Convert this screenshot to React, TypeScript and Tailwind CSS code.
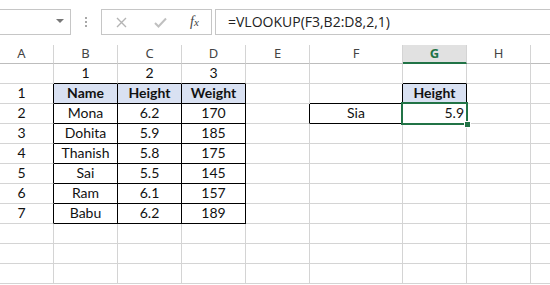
import React from "react";

const W = [54, 64, 64, 64, 64, 93, 64, 64, 60];
const LETTERS = ["A", "B", "C", "D", "E", "F", "G", "H", ""];
const GRID = "#d4d4d4";
const BLK = "#000000";

type Cell = { t?: string; align?: "c" | "r" | "l"; bold?: boolean; bg?: string; r?: string; b?: string };

const data: (string | undefined)[][] = [
  ["", "1", "2", "3", "", "", "", "", ""],
  ["1", "Name", "Height", "Weight", "", "", "Height", "", ""],
  ["2", "Mona", "6.2", "170", "", "Sia", "5.9", "", ""],
  ["3", "Dohita", "5.9", "185", "", "", "", "", ""],
  ["4", "Thanish", "5.8", "175", "", "", "", "", ""],
  ["5", "Sai", "5.5", "145", "", "", "", "", ""],
  ["6", "Ram", "6.1", "157", "", "", "", "", ""],
  ["7", "Babu", "6.2", "189", "", "", "", "", ""],
  ["", "", "", "", "", "", "", "", ""],
  ["", "", "", "", "", "", "", "", ""],
  ["", "", "", "", "", "", "", "", ""],
];

function cellFor(r: number, c: number): Cell {
  const cell: Cell = { t: data[r][c], align: "c", r: GRID, b: GRID };
  if (r === 0 && c >= 1 && c <= 3) cell.b = BLK;
  if (r >= 1 && r <= 7) {
    if (c === 0) cell.r = BLK;
    if (c >= 1 && c <= 3) {
      cell.r = BLK;
      cell.b = BLK;
    }
  }
  if (r === 1 && c >= 1 && c <= 3) {
    cell.bold = true;
    cell.bg = "#d9e1f2";
  }
  if (r === 0 && c === 6) cell.b = BLK;
  if (r === 1 && c === 5) {
    cell.r = BLK;
    cell.b = BLK;
  }
  if (r === 1 && c === 6) {
    cell.r = BLK;
    cell.b = BLK;
    cell.bold = true;
    cell.bg = "#d9e1f2";
  }
  if (r === 2 && c === 4) cell.r = BLK;
  if (r === 2 && c === 5) {
    cell.r = BLK;
    cell.b = BLK;
  }
  if (r === 2 && c === 6) {
    cell.align = "r";
    cell.b = BLK;
    cell.r = BLK;
  }
  return cell;
}

export default function App() {
  return (
    <div
      className="relative w-[550px] h-[285px] overflow-hidden bg-white"
      style={{ fontFamily: "Lato, 'Liberation Sans', sans-serif" }}
    >
      {/* formula bar */}
      <div className="flex items-start h-[45px] pt-[9px]">
        <div className="relative w-[71px] h-[26px] border border-l-0 border-[#c6c6c6]">
          <svg className="absolute left-[56px] top-[9px]" width="8" height="5" viewBox="0 0 8 5">
            <path d="M0 0 L8 0 L4 4 Z" fill="#777" />
          </svg>
        </div>
        <div className="w-[30px] h-[26px] flex flex-col items-center justify-center gap-[2px]">
          <div className="w-[2px] h-[2px] bg-[#a8a8a8]" />
          <div className="w-[2px] h-[2px] bg-[#a8a8a8]" />
          <div className="w-[2px] h-[2px] bg-[#a8a8a8]" />
        </div>
        <div className="w-[111px] h-[26px] border border-[#c6c6c6] flex items-center">
          <svg className="ml-[14px]" width="11" height="11" viewBox="0 0 11 11">
            <path d="M1 1 L10 10 M10 1 L1 10" stroke="#b4b4b4" strokeWidth="1.4" />
          </svg>
          <svg className="ml-[27px]" width="13" height="11" viewBox="0 0 13 11">
            <path d="M1 6 L4.5 9.5 L12 1.5" stroke="#c0c0c0" strokeWidth="2" fill="none" />
          </svg>
          <span
            className="ml-[23px] text-[14px] italic text-[#444] leading-none"
            style={{ fontFamily: "'Liberation Serif', serif" }}
          >
            f<span className="text-[11px]">x</span>
          </span>
        </div>
        <div className="ml-[3px] flex-1 h-[26px] border border-r-0 border-[#c6c6c6] flex items-center pl-[12px]">
          <span
            className="text-[14px] text-[#222] leading-none"
            style={{ fontFamily: "'Open Sans', 'Liberation Sans', sans-serif" }}
          >
            =VLOOKUP(F3,B2:D8,2,1)
          </span>
        </div>
      </div>

      {/* column headers */}
      <div className="flex h-[19px]">
        {W.map((w, i) => {
          const sel = i === 6;
          return (
            <div
              key={i}
              style={{ width: w, flexShrink: 0 }}
              className={
                "h-[19px] flex items-center justify-center text-[13px] border-r border-[#d4d4d4] " +
                (sel
                  ? "bg-[#e1e1e1] border-b-2 border-b-[#217346] text-[#217346] font-bold"
                  : "border-b border-b-[#bdbdbd] text-[#444]") +
                (i === 0 ? " pr-[10px]" : "")
              }
            >
              <span style={{ fontFamily: "'Noto Sans', 'Liberation Sans', sans-serif" }}>{LETTERS[i]}</span>
            </div>
          );
        })}
      </div>

      {/* grid rows */}
      {data.map((row, r) => (
        <div key={r} className="flex h-[20px]">
          {row.map((_, c) => {
            const cell = cellFor(r, c);
            return (
              <div
                key={c}
                style={{
                  width: W[c],
                  flexShrink: 0,
                  borderRight: `1px solid ${cell.r}`,
                  borderBottom: `1px solid ${cell.b}`,
                  backgroundColor: cell.bg,
                }}
                className={
                  "h-[20px] flex items-end pb-[1px] text-[14px] leading-[18px] text-[#111] " +
                  (cell.align === "r" ? "justify-end pr-[2px] " : "justify-center ") +
                  (cell.bold ? "font-bold " : "") +
                  (c === 0 ? "pr-[10px]" : "")
                }
              >
                {cell.t}
              </div>
            );
          })}
        </div>
      ))}

      {/* selection */}
      <div className="absolute left-[401px] top-[102px] w-[67px] h-[23px] border-2 border-[#217346] pointer-events-none" />
      <div className="absolute left-[464px] top-[121px] w-[7px] h-[7px] bg-[#217346] border border-white" />
    </div>
  );
}
